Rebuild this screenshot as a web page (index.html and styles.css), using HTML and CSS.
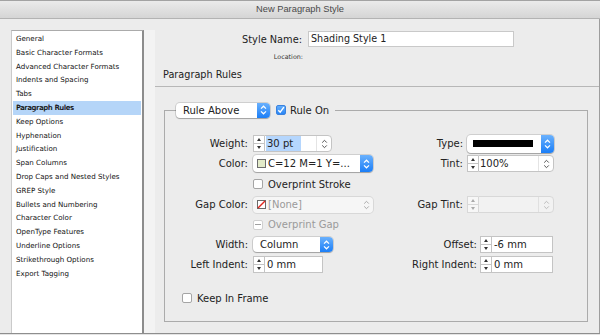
FILE: index.html
```html
<!DOCTYPE html>
<html lang="en">

<head>
    <meta charset="UTF-8">
    <meta name="viewport" content="width=device-width, initial-scale=1.0">
    <title>New Paragraph Style</title>
    <link rel="stylesheet" href="styles.css">
</head>

<body>
    <div class="window">
        <div class="titlebar">New Paragraph Style</div>
        <div class="main">
            <aside class="sidebar">
                <ul class="categories">
                    <li>General</li>
                    <li>Basic Character Formats</li>
                    <li>Advanced Character Formats</li>
                    <li>Indents and Spacing</li>
                    <li>Tabs</li>
                    <li class="selected">Paragraph Rules</li>
                    <li>Keep Options</li>
                    <li>Hyphenation</li>
                    <li>Justification</li>
                    <li>Span Columns</li>
                    <li>Drop Caps and Nested Styles</li>
                    <li>GREP Style</li>
                    <li>Bullets and Numbering</li>
                    <li>Character Color</li>
                    <li>OpenType Features</li>
                    <li>Underline Options</li>
                    <li>Strikethrough Options</li>
                    <li>Export Tagging</li>
                </ul>
                <div class="splitter"></div>
            </aside>

            <section class="panel">
                <div class="name-row">
                    <span class="name-label">Style Name:</span>
                    <div class="text-input">Shading Style 1</div>
                </div>
                <div class="location">Location:</div>
                <h3 class="section-title">Paragraph Rules</h3>

                <fieldset class="rules">
                    <legend class="rules-legend">
                        <div class="popup popup-rule">
                            <span class="popup-text">Rule Above</span>
                            <span class="popup-arrows"><svg width="7" height="10" viewBox="0 0 7 10"><path d="M1 3.6 3.5 1.2 6 3.6M1 6.4 3.5 8.8 6 6.4" fill="none" stroke="#fff" stroke-width="1.2"/></svg></span>
                        </div>
                        <span class="checkbox checked"><svg width="8" height="8" viewBox="0 0 8 8"><path d="M1.3 4.2 3.2 6.2 6.9 1.2" fill="none" stroke="#fff" stroke-width="1.4"/></svg></span>
                        <span>Rule On</span>
                    </legend>

                    <div class="rows">
                        <div class="row">
                            <div class="half left">
                                <span class="label">Weight:</span>
                                <div class="stepper"><span class="up"></span><span class="down"></span></div>
                                <div class="combo combo-weight">
                                    <span class="value"><span class="selection">30 pt</span></span>
                                    <span class="chev"><svg width="7" height="10" viewBox="0 0 7 10"><path d="M1.2 3.6 3.5 1.3 5.8 3.6M1.2 6.4 3.5 8.7 5.8 6.4" fill="none" stroke="#555" stroke-width="1"/></svg></span>
                                </div>
                            </div>
                            <div class="half right">
                                <span class="label">Type:</span>
                                <div class="popup popup-type">
                                    <span class="popup-text"><span class="line-swatch"></span></span>
                                    <span class="popup-arrows"><svg width="7" height="10" viewBox="0 0 7 10"><path d="M1 3.6 3.5 1.2 6 3.6M1 6.4 3.5 8.8 6 6.4" fill="none" stroke="#fff" stroke-width="1.2"/></svg></span>
                                </div>
                            </div>
                        </div>

                        <div class="row">
                            <div class="half left">
                                <span class="label">Color:</span>
                                <div class="popup popup-color">
                                    <span class="popup-text"><span class="swatch"></span>C=12 M=1 Y=...</span>
                                    <span class="popup-arrows"><svg width="7" height="10" viewBox="0 0 7 10"><path d="M1 3.6 3.5 1.2 6 3.6M1 6.4 3.5 8.8 6 6.4" fill="none" stroke="#fff" stroke-width="1.2"/></svg></span>
                                </div>
                            </div>
                            <div class="half right">
                                <span class="label">Tint:</span>
                                <div class="stepper"><span class="up"></span><span class="down"></span></div>
                                <div class="combo combo-tint">
                                    <span class="value">100%</span>
                                    <span class="chev"><svg width="7" height="10" viewBox="0 0 7 10"><path d="M1.2 3.6 3.5 1.3 5.8 3.6M1.2 6.4 3.5 8.7 5.8 6.4" fill="none" stroke="#555" stroke-width="1"/></svg></span>
                                </div>
                            </div>
                        </div>

                        <div class="row tall">
                            <div class="half left">
                                <span class="label"></span>
                                <span class="checkbox"></span>
                                <span class="check-text">Overprint Stroke</span>
                            </div>
                        </div>

                        <div class="row">
                            <div class="half left">
                                <span class="label">Gap Color:</span>
                                <div class="popup popup-gap disabled">
                                    <span class="popup-text"><svg class="none-swatch" width="9" height="9" viewBox="0 0 9 9"><rect x=".5" y=".5" width="8" height="8" fill="#fff" stroke="#6a6a6a"/><path d="M1 8 8 1" stroke="#e0261e" stroke-width="1.5"/></svg>[None]</span>
                                    <span class="popup-arrows"><svg width="7" height="10" viewBox="0 0 7 10"><path d="M1.2 3.6 3.5 1.3 5.8 3.6M1.2 6.4 3.5 8.7 5.8 6.4" fill="none" stroke="#aaa" stroke-width="1"/></svg></span>
                                </div>
                            </div>
                            <div class="half right">
                                <span class="label">Gap Tint:</span>
                                <div class="stepper disabled"><span class="up"></span><span class="down"></span></div>
                                <div class="combo combo-tint disabled">
                                    <span class="value"></span>
                                    <span class="chev"><svg width="7" height="10" viewBox="0 0 7 10"><path d="M1.2 3.6 3.5 1.3 5.8 3.6M1.2 6.4 3.5 8.7 5.8 6.4" fill="none" stroke="#bbb" stroke-width="1"/></svg></span>
                                </div>
                            </div>
                        </div>

                        <div class="row">
                            <div class="half left">
                                <span class="label"></span>
                                <span class="checkbox mixed"></span>
                                <span class="check-text muted">Overprint Gap</span>
                            </div>
                        </div>

                        <div class="row">
                            <div class="half left">
                                <span class="label">Width:</span>
                                <div class="popup popup-width">
                                    <span class="popup-text">Column</span>
                                    <span class="popup-arrows"><svg width="7" height="10" viewBox="0 0 7 10"><path d="M1 3.6 3.5 1.2 6 3.6M1 6.4 3.5 8.8 6 6.4" fill="none" stroke="#fff" stroke-width="1.2"/></svg></span>
                                </div>
                            </div>
                            <div class="half right">
                                <span class="label wide">Offset:</span>
                                <div class="stepper"><span class="up"></span><span class="down"></span></div>
                                <div class="field field-offset">-6 mm</div>
                            </div>
                        </div>

                        <div class="row">
                            <div class="half left">
                                <span class="label">Left Indent:</span>
                                <div class="stepper"><span class="up"></span><span class="down"></span></div>
                                <div class="field field-indent">0 mm</div>
                            </div>
                            <div class="half right">
                                <span class="label wide">Right Indent:</span>
                                <div class="stepper"><span class="up"></span><span class="down"></span></div>
                                <div class="field field-offset">0 mm</div>
                            </div>
                        </div>

                        <div class="row keep-row">
                            <span class="checkbox"></span>
                            <span class="check-text">Keep In Frame</span>
                        </div>
                    </div>
                </fieldset>
            </section>
        </div>
    </div>
</body>

</html>
```

FILE: styles.css
```css
* {
    box-sizing: border-box;
}

body {
    margin: 0;
    background: #e4e4e4;
    font-family: "DejaVu Sans", sans-serif;
    color: #222;
}

.window {
    width: 600px;
    height: 334px;
    display: flex;
    flex-direction: column;
    background: #ececec;
    border-bottom: 1px solid #8e8e8e;
}

.titlebar {
    height: 19px;
    flex: none;
    border-top: 1px solid #a3a3a3;
    border-bottom: 1px solid #b3b3b3;
    background: linear-gradient(#ebebeb, #d5d5d5);
    font: 9.3px "Liberation Sans", Arial, sans-serif;
    color: #4a4a4a;
    text-align: center;
    line-height: 17px;
}

.main {
    flex: 1;
    display: flex;
    min-height: 0;
}

/* Category list */
.sidebar {
    width: 155px;
    flex: none;
    display: flex;
    padding: 11px 0 0 11px;
}

.categories {
    list-style: none;
    margin: 0;
    padding: 1px 1px 0;
    width: 133px;
    flex: none;
    background: #fff;
    border-top: 1px solid #ababab;
    border-left: 1px solid #cacaca;
    border-right: 2px solid #8c8c8c;
    font-size: 7.1px;
    color: #111;
}

.categories li {
    height: 13.8px;
    line-height: 14.4px;
    padding-left: 3px;
    white-space: nowrap;
}

.categories li.selected {
    background: #b5d5f8;
    text-shadow: 0.45px 0 0 #111;
}

.splitter {
    flex: 1;
    background: #f3f3f3;
}

/* Right panel */
.panel {
    flex: 1;
    display: flex;
    flex-direction: column;
    padding-top: 12px;
    border-right: 1px solid #9d9d9d;
    font-size: 10px;
}

.name-row {
    display: flex;
    align-items: center;
    gap: 6px;
}

.name-label {
    width: 147px;
    text-align: right;
    font-size: 9.8px;
}

.text-input {
    width: 206px;
    height: 16px;
    background: #fff;
    border: 1px solid #c9c9c9;
    padding-left: 2px;
    line-height: 14px;
    font-size: 9.6px;
}

.location {
    width: 148px;
    height: 10px;
    margin-top: 5px;
    text-align: right;
    font-size: 6.4px;
    line-height: 10px;
    color: #333;
}

.section-title {
    margin: 4px 0 0;
    height: 21px;
    padding-left: 8px;
    line-height: 18px;
    font-size: 9.7px;
    font-weight: normal;
    border-bottom: 1px solid #b7b7b7;
}

.rules {
    margin: 15px 11px 0 9px;
    padding: 17px 0 15px;
    border: 1px solid #ababab;
    min-width: 0;
}

.rules-legend {
    display: flex;
    align-items: center;
    height: 16px;
    margin-left: 11px;
    padding: 0 6px 0 0;
}

.rules-legend .checkbox {
    margin: 0 4px 0 6px;
}

.rows {
    display: flex;
    flex-direction: column;
    gap: 3px;
}

.row {
    display: flex;
    align-items: center;
    height: 17px;
}

.row.tall {
    height: 18px;
}

.half {
    display: flex;
    align-items: center;
}

.half.left {
    width: 222px;
    flex: none;
}

.label {
    width: 83px;
    flex: none;
    margin-right: 5px;
    text-align: right;
    white-space: nowrap;
}

.half.right .label {
    width: 76px;
    margin-right: 4px;
}

.half.right .label.wide {
    width: 90px;
    margin-right: 3px;
}

.keep-row {
    margin-top: 14px;
    height: 16px;
    padding-left: 17px;
}

/* Controls */
.checkbox {
    width: 10px;
    height: 10px;
    flex: none;
    display: flex;
    align-items: center;
    justify-content: center;
    background: #fff;
    border: 1px solid #a5a5a5;
    border-radius: 2px;
}

.checkbox.checked {
    background: linear-gradient(#62adfc, #2a86f6);
    border-color: #3a82de;
}

.checkbox.mixed {
    border-color: #d0d0d0;
}

.checkbox.mixed::before {
    content: "";
    width: 6px;
    height: 1.5px;
    background: #a0a0a0;
}

.check-text {
    margin-left: 5px;
    white-space: nowrap;
}

.muted {
    color: #9a9a9a;
}

.stepper {
    width: 11px;
    height: 17px;
    flex: none;
    display: flex;
    flex-direction: column;
    background: #fff;
    border: 1px solid #c4c4c4;
    border-right: none;
}

.stepper span {
    flex: 1;
    display: flex;
    align-items: center;
    justify-content: center;
}

.stepper .down {
    border-top: 1px solid #c4c4c4;
}

.stepper .up::before {
    content: "";
    border: 2.5px solid transparent;
    border-top: none;
    border-bottom: 3px solid #333;
}

.stepper .down::before {
    content: "";
    border: 2.5px solid transparent;
    border-bottom: none;
    border-top: 3px solid #333;
}

.stepper.disabled {
    border-color: #d8d8d8;
    background: #f7f7f7;
}

.stepper.disabled .down {
    border-top-color: #d8d8d8;
}

.stepper.disabled .up::before {
    border-bottom-color: #aaa;
}

.stepper.disabled .down::before {
    border-top-color: #aaa;
}

.field {
    height: 17px;
    flex: none;
    display: flex;
    align-items: center;
    padding-left: 2px;
    background: #fff;
    border: 1px solid #c4c4c4;
}

.field-indent {
    width: 59px;
}

.field-offset {
    width: 62px;
}

.combo {
    height: 17px;
    flex: none;
    display: flex;
    background: #fff;
    border: 1px solid #c4c4c4;
    border-radius: 0 4px 4px 0;
}

.combo-weight {
    width: 68px;
}

.combo-tint {
    width: 76px;
}

.combo .value {
    flex: 1;
    display: flex;
    align-items: center;
    padding-left: 1px;
}

.combo .selection {
    height: 100%;
    display: flex;
    align-items: center;
    padding: 0 8px 0 1px;
    background: #b5d6fd;
}

.combo .chev {
    width: 15px;
    display: flex;
    align-items: center;
    justify-content: center;
    border-left: 1px solid #e4e4e4;
}

.combo.disabled {
    background: #f2f2f2;
    border-color: #d8d8d8;
}

.combo.disabled .chev {
    border-left-color: #e0e0e0;
}

.popup {
    height: 15px;
    flex: none;
    display: flex;
    background: #fff;
    border-radius: 4px;
    box-shadow: 0 0 0 1px rgba(0, 0, 0, 0.12), 0 1px 1px rgba(0, 0, 0, 0.22);
}

.popup-text {
    flex: 1;
    display: flex;
    align-items: center;
    padding-left: 7px;
    white-space: nowrap;
    overflow: hidden;
}

.popup-arrows {
    width: 13px;
    flex: none;
    display: flex;
    align-items: center;
    justify-content: center;
    background: linear-gradient(#6ab1fd, #1b7ef7);
    border-radius: 0 4px 4px 0;
}

.popup-rule {
    width: 94px;
}

.popup-width {
    width: 80px;
}

.popup-type {
    width: 87px;
    height: 18px;
}

.popup-type .popup-text {
    padding-left: 6px;
}

.line-swatch {
    width: 60px;
    height: 7px;
    background: #000;
}

.popup-color,
.popup-gap {
    width: 120px;
    height: 17px;
}

.popup-color .popup-text,
.popup-gap .popup-text {
    padding-left: 4px;
}

.swatch {
    width: 9px;
    height: 9px;
    flex: none;
    margin-right: 2px;
    background: #e3ebc9;
    border: 1px solid #6d6d6d;
}

.none-swatch {
    flex: none;
    margin-right: 2px;
}

.popup.disabled {
    height: 16px;
    background: #f6f6f6;
    box-shadow: 0 0 0 1px #d8d8d8;
    color: #9a9a9a;
}

.popup.disabled .popup-arrows {
    background: none;
}
```
